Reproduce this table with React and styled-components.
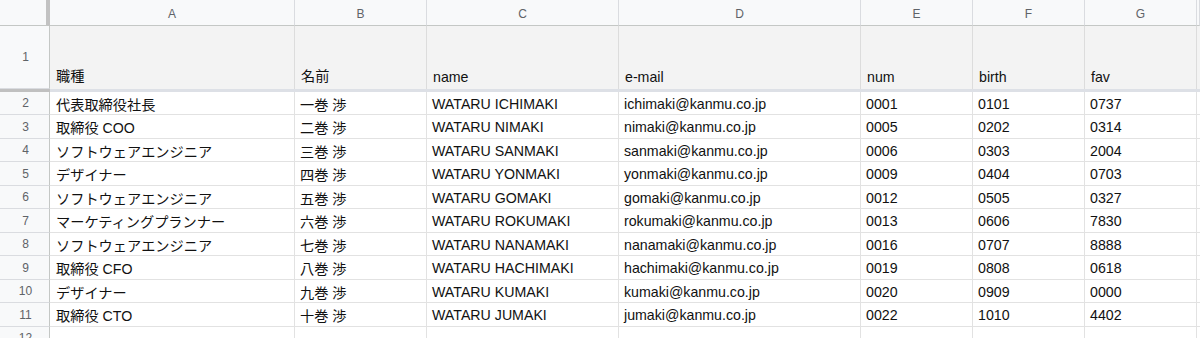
import React from "react";
import styled, { createGlobalStyle } from "styled-components";

const Global = createGlobalStyle`
  html, body { margin: 0; padding: 0; background: #ffffff; overflow: hidden; }
  body { font-family: "Liberation Sans", Arial, "Noto Sans CJK JP", sans-serif; }
`;

const COLS = "50px 245px 132px 192px 242px 112px 112px 112px 1fr";

const Sheet = styled.div`
  width: 1200px;
  height: 338px;
  overflow: hidden;
  display: flex;
  flex-direction: column;
  background: #fff;
`;

const Row = styled.div`
  display: grid;
  grid-template-columns: ${COLS};
  height: ${(p) => p.$h}px;
  flex: none;
`;

const Corner = styled.div`
  box-sizing: border-box;
  background: #f8f9fa;
  border-bottom: 1px solid #c4c7c5;
  border-right: 4px solid #c2c2c2;
`;

const ColHead = styled.div`
  box-sizing: border-box;
  background: #f8f9fa;
  border-bottom: 1px solid #c4c7c5;
  border-right: 1px solid #dadce0;
  display: flex;
  align-items: center;
  justify-content: center;
  color: #5f6368;
  font-size: 12px;
  padding-top: 2px;
`;

const RowHead = styled.div`
  box-sizing: border-box;
  background: #f8f9fa;
  border-right: 1px solid #c4c7c5;
  border-bottom: 1px solid #dadce0;
  display: flex;
  align-items: center;
  justify-content: center;
  color: #5f6368;
  font-size: 12px;
  padding-left: 2px;
`;

const TitleCell = styled.div`
  box-sizing: border-box;
  background: #f3f3f3;
  border-right: 1px solid #dcdcdc;
  display: flex;
  align-items: flex-end;
  padding: 0 5px 4px 6px;
  font-size: 14.2px;
  color: #111;
  white-space: nowrap;
  overflow: hidden;
`;

const Cell = styled.div`
  box-sizing: border-box;
  border-right: 1px solid #e2e2e2;
  border-bottom: 1px solid #e2e2e2;
  display: flex;
  align-items: center;
  padding: 1px 5px 0 ${(p) => (p.$first ? 6 : 5)}px;
  font-size: 14.2px;
  color: #111;
  white-space: nowrap;
  overflow: hidden;
`;

const FrozenBar = styled.div`
  display: grid;
  grid-template-columns: 50px 1fr;
  height: 3px;
  flex: none;
`;

const BarPart = styled.div`
  background: ${(p) => p.$c};
`;

const letters = ["A", "B", "C", "D", "E", "F", "G"];
const titles = ["職種", "名前", "name", "e-mail", "num", "birth", "fav"];

const data = [
  ["代表取締役社長", "一巻 渉", "WATARU ICHIMAKI", "ichimaki@kanmu.co.jp", "0001", "0101", "0737"],
  ["取締役 COO", "二巻 渉", "WATARU NIMAKI", "nimaki@kanmu.co.jp", "0005", "0202", "0314"],
  ["ソフトウェアエンジニア", "三巻 渉", "WATARU SANMAKI", "sanmaki@kanmu.co.jp", "0006", "0303", "2004"],
  ["デザイナー", "四巻 渉", "WATARU YONMAKI", "yonmaki@kanmu.co.jp", "0009", "0404", "0703"],
  ["ソフトウェアエンジニア", "五巻 渉", "WATARU GOMAKI", "gomaki@kanmu.co.jp", "0012", "0505", "0327"],
  ["マーケティングプランナー", "六巻 渉", "WATARU ROKUMAKI", "rokumaki@kanmu.co.jp", "0013", "0606", "7830"],
  ["ソフトウェアエンジニア", "七巻 渉", "WATARU NANAMAKI", "nanamaki@kanmu.co.jp", "0016", "0707", "8888"],
  ["取締役 CFO", "八巻 渉", "WATARU HACHIMAKI", "hachimaki@kanmu.co.jp", "0019", "0808", "0618"],
  ["デザイナー", "九巻 渉", "WATARU KUMAKI", "kumaki@kanmu.co.jp", "0020", "0909", "0000"],
  ["取締役 CTO", "十巻 渉", "WATARU JUMAKI", "jumaki@kanmu.co.jp", "0022", "1010", "4402"],
  ["", "", "", "", "", "", ""],
];

export default function App() {
  return (
    <>
      <Global />
      <Sheet>
        <Row $h={26}>
          <Corner />
          {letters.map((l) => (
            <ColHead key={l}>{l}</ColHead>
          ))}
          <ColHead />
        </Row>
        <Row $h={63}>
          <RowHead>1</RowHead>
          {titles.map((t, i) => (
            <TitleCell key={i}>{t}</TitleCell>
          ))}
          <TitleCell />
        </Row>
        <FrozenBar>
          <BarPart $c="#c0c0c0" />
          <BarPart $c="#dde0e6" />
        </FrozenBar>
        {data.map((r, i) => (
          <Row $h={i % 2 === 0 ? 23 : 24} key={i}>
            <RowHead>{i + 2}</RowHead>
            {r.map((v, j) => (
              <Cell key={j} $first={j === 0}>
                {v}
              </Cell>
            ))}
            <Cell />
          </Row>
        ))}
      </Sheet>
    </>
  );
}
